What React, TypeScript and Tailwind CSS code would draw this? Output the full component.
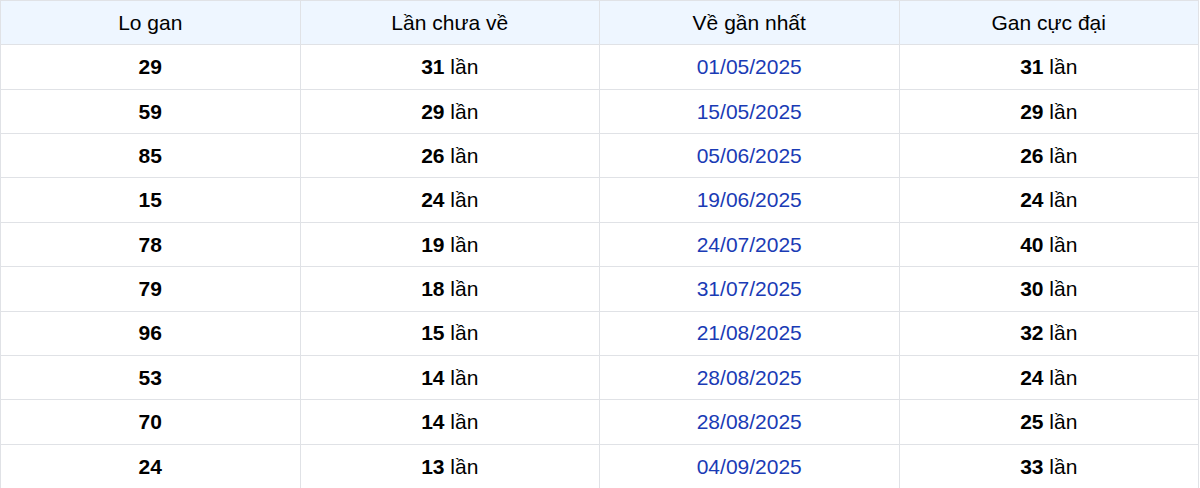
import React from "react";

const rows: [string, string, string, string][] = [
  ["29", "31", "01/05/2025", "31"],
  ["59", "29", "15/05/2025", "29"],
  ["85", "26", "05/06/2025", "26"],
  ["15", "24", "19/06/2025", "24"],
  ["78", "19", "24/07/2025", "40"],
  ["79", "18", "31/07/2025", "30"],
  ["96", "15", "21/08/2025", "32"],
  ["53", "14", "28/08/2025", "24"],
  ["70", "14", "28/08/2025", "25"],
  ["24", "13", "04/09/2025", "33"],
];

export default function App() {
  return (
    <div className="w-[1200px] bg-white" style={{ fontFamily: '"Liberation Sans", Arial, sans-serif' }}>
      <table className="w-[1199px] border-collapse table-fixed text-[21px] text-black">
        <thead>
          <tr className="bg-[#eef6ff]">
            {["Lo gan", "Lần chưa về", "Về gần nhất", "Gan cực đại"].map((h) => (
              <th key={h} className="h-[44.36px] p-0 font-normal text-center border border-[#e0e2e6]">
                {h}
              </th>
            ))}
          </tr>
        </thead>
        <tbody>
          {rows.map((r, i) => (
            <tr key={i}>
              <td className="h-[44.36px] p-0 text-center border border-[#e0e2e6] font-bold">{r[0]}</td>
              <td className="h-[44.36px] p-0 text-center border border-[#e0e2e6]">
                <span className="font-bold">{r[1]}</span> lần
              </td>
              <td className="h-[44.36px] p-0 text-center border border-[#e0e2e6] text-[#1a3bb5]">{r[2]}</td>
              <td className="h-[44.36px] p-0 text-center border border-[#e0e2e6]">
                <span className="font-bold">{r[3]}</span> lần
              </td>
            </tr>
          ))}
        </tbody>
      </table>
    </div>
  );
}
